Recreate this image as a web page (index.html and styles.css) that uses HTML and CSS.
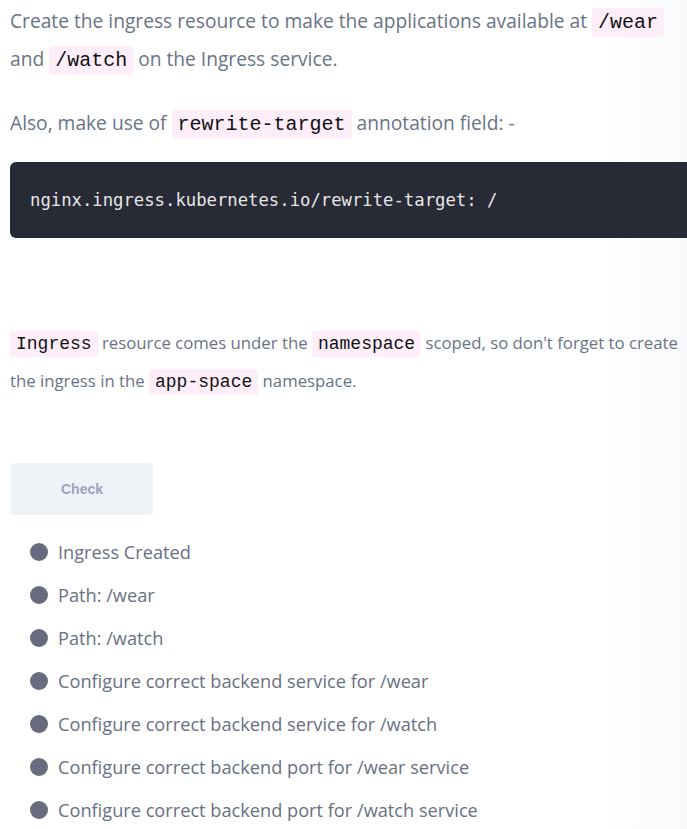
FILE: index.html
```html
<!DOCTYPE html>
<html>
<head>
<meta charset="utf-8">
<link rel="stylesheet" href="styles.css">
</head>
<body>
<div class="edge-shade"></div>
<main class="content">
  <p class="para lead">Create the ingress resource to make the applications available at <code class="chip">/wear</code> and <code class="chip">/watch</code> on the Ingress service.</p>
  <p class="para lead gap-top">Also, make use of <code class="chip">rewrite-target</code> annotation field: -</p>
  <pre class="codeblock"><code>nginx.ingress.kubernetes.io/rewrite-target: /</code></pre>
  <p class="para small"><code class="chip">Ingress</code> resource comes under the <code class="chip">namespace</code> scoped, so don't forget to create the ingress in the <code class="chip">app-space</code> namespace.</p>
  <button class="check-btn">Check</button>
  <ul class="checks">
    <li><span class="dot"></span>Ingress Created</li>
    <li><span class="dot"></span>Path: /wear</li>
    <li><span class="dot"></span>Path: /watch</li>
    <li><span class="dot"></span>Configure correct backend service for /wear</li>
    <li><span class="dot"></span>Configure correct backend service for /watch</li>
    <li><span class="dot"></span>Configure correct backend port for /wear service</li>
    <li><span class="dot"></span>Configure correct backend port for /watch service</li>
  </ul>
</main>
</body>
</html>
```
FILE: styles.css
```css
html, body {
  margin: 0;
  padding: 0;
  background: #ffffff;
  overflow: hidden;
}
body {
  font-family: "Open Sans", "Lato", sans-serif;
  color: #697386;
  width: 687px;
  height: 829px;
  position: relative;
}
.content {
  position: relative;
  z-index: 1;
  padding: 2px 0 0 10px;
}
.para {
  margin: 0;
}
.lead {
  font-size: 19.2px;
  line-height: 38px;
}
.gap-top {
  margin-top: 26px;
}
.small {
  font-size: 16.75px;
  line-height: 38px;
  margin-top: 86px;
}
.chip {
  font-family: "Liberation Mono", monospace;
  font-size: 20px;
  line-height: 20px;
  color: #111;
  background: #fdeefa;
  border-radius: 3px;
  padding: 3px 6px;
}
.small .chip {
  font-size: 18px;
  line-height: 18px;
  padding: 3px 6px;
}
.codeblock {
  box-sizing: border-box;
  margin: 20px 0 0 0;
  background: #282a36;
  border-radius: 6px 0 0 6px;
  padding: 24px 20px;
  height: 76px;
  width: 677px;
  font-family: "Liberation Mono", monospace;
  font-size: 17.25px;
  line-height: 28px;
  color: #e6e6e6;
}
.check-btn {
  display: block;
  margin-top: 63px;
  margin-left: 1px;
  width: 142px;
  height: 52px;
  border: none;
  border-radius: 4px;
  background: #eff3f8;
  color: #9aa2bd;
  font-family: "Liberation Sans", "Lato", sans-serif;
  font-weight: 700;
  font-size: 14px;
}
.checks {
  list-style: none;
  margin: 15px 0 0 0;
  padding: 0 0 0 20px;
}
.checks li {
  display: flex;
  align-items: center;
  gap: 10px;
  height: 43px;
  font-size: 18.2px;
  color: #697083;
}
.dot {
  width: 18px;
  height: 18px;
  border-radius: 50%;
  background: #676b7d;
  flex: none;
}
.edge-shade {
  position: absolute;
  z-index: 0;
  top: 0;
  right: 0;
  width: 90px;
  height: 829px;
  background: linear-gradient(to right, rgba(240,242,246,0), rgba(240,242,246,0.4));
  pointer-events: none;
}
```
